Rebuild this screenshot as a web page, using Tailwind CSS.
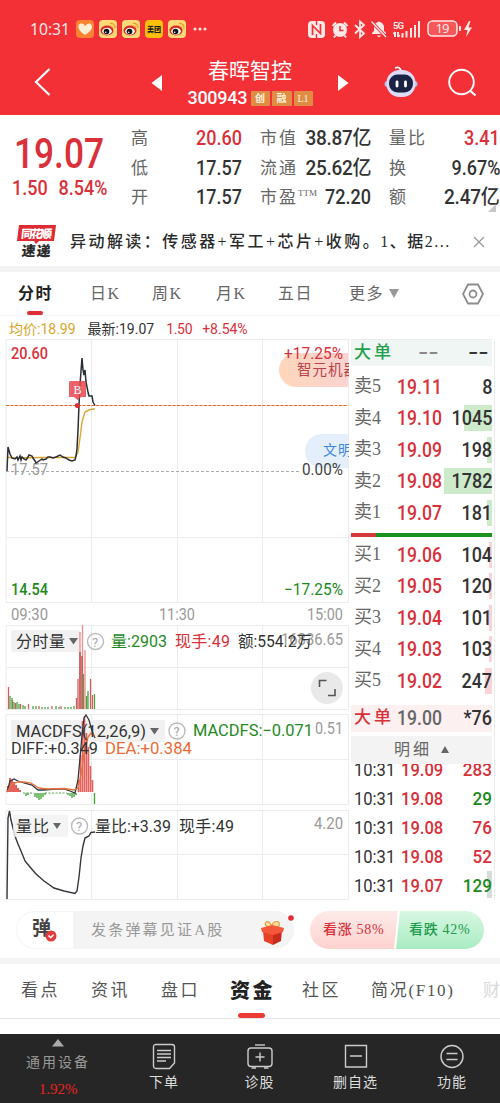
<!DOCTYPE html>
<html lang="zh">
<head>
    <meta charset="UTF-8">
    <meta name="viewport" content="width=device-width, initial-scale=1.0">
    <title>春晖智控 300943</title>
    <script src="https://cdn.jsdelivr.net/npm/@tailwindcss/browser@4"></script>
</head>
<body class="bg-white w-[500px] h-[1103px] overflow-hidden font-['Roboto','Noto_Sans_CJK_SC',sans-serif] text-[#333]">

<!-- 顶部 -->
<header class="h-[115px] bg-[#f23036] text-white">
    <!-- 状态栏 -->
    <svg class="block" width="500" height="50" viewBox="0 0 500 50">
        <text x="30" y="34.500" font-size="16" fill="#ffe9e6" textLength="40" lengthAdjust="spacingAndGlyphs" font-family="Noto Sans">10:31</text>
        <rect x="76" y="20" width="18" height="18" rx="4" fill="#f98330"/>
        <path d="M85 35C77 30 77 24 81 23.500Q84 23 85 26Q87 23 90 23.500C94 26 92 31 85 35Z" fill="#fff0d5"/>
        <defs>
            <g id="weibo">
                <rect width="18" height="18" rx="4" fill="#ffd978"/>
                <ellipse cx="8" cy="10.500" rx="6.500" ry="5" fill="#d92c22"/>
                <ellipse cx="8" cy="11.300" rx="4.800" ry="3.500" fill="#fff"/>
                <circle cx="7.500" cy="11.500" r="2.800" fill="#111"/>
                <circle cx="6.700" cy="12.200" r=".8" fill="#fff"/>
                <path d="M11 3.500Q16 3 16 8.500M11.500 6Q13.500 6 13.500 8" fill="none" stroke="#f09a2c" stroke-width="1.200"/>
            </g>
        </defs>
        <use href="#weibo" x="99" y="20"/>
        <use href="#weibo" x="122" y="20"/>
        <rect x="145" y="20" width="18" height="18" rx="4" fill="#fbc10a"/>
        <text x="147" y="32" font-size="7" font-weight="900" fill="#1b1b1b" font-family="Noto Sans CJK SC">美团</text>
        <use href="#weibo" x="168" y="20"/>
        <g fill="#ffe9e6"><circle cx="195" cy="29" r="1.500"/><circle cx="200" cy="29" r="1.500"/><circle cx="205" cy="29" r="1.500"/></g>
        <!-- NFC -->
        <rect x="308" y="21" width="17" height="17" rx="4" fill="#ffe9e6"/>
        <path d="M312.500 35V25.500L320.500 33.500V24" fill="none" stroke="#f23036" stroke-width="1.700"/>
        <path d="M316.500 20V25M316.500 34V39" stroke="#f23036" stroke-width="1.400"/>
        <!-- 闹钟 -->
        <circle cx="340" cy="30" r="7" fill="#ffe9e6"/>
        <path d="M332.500 26L336 22.500M347.500 26L344 22.500M335.500 35.500L334 37.500M344.500 35.500L346 37.500" stroke="#ffe9e6" stroke-width="2"/>
        <path d="M340 26V30.500H343.500" fill="none" stroke="#f23036" stroke-width="1.500"/>
        <!-- 蓝牙 -->
        <path d="M355 25L364 33.500L360 37V21.500L364 25L355 33.500" fill="none" stroke="#ffe9e6" stroke-width="1.800"/>
        <!-- 静音 -->
        <path d="M372 34V33L374 31V27Q374 23 379 21.500Q384 23 384 27V31L386 33V34ZM377 35.500H381Q379 39 377 35.500Z" fill="#ffe9e6"/>
        <path d="M371 21L386 37" stroke="#f23036" stroke-width="3"/>
        <path d="M371.500 21.500L386 37" stroke="#ffe9e6" stroke-width="1.400"/>
        <!-- 信号 -->
        <text x="393" y="28.500" font-size="9.500" font-weight="700" fill="#ffe9e6" textLength="11">5G</text>
        <path d="M395 32V37M393.500 34L395 32M398 32V37M398 37L399.500 35M402.500 33V37.500M406.500 31V37.500M411 28V37.500M415 25V37.500M419 21V37.500" stroke="#ffe9e6" stroke-width="2"/>
        <!-- 电池 -->
        <rect x="428" y="21" width="29" height="15" rx="4.500" fill="#f5575b" stroke="#ffe9e6" stroke-width="1.500"/>
        <text x="435.500" y="33" font-size="13" fill="#ffe9e6" textLength="14" font-family="Noto Sans">19</text>
        <path d="M460 26V31" stroke="#ffe9e6" stroke-width="2"/>
        <path d="M469 21L464 30H467.500L466 37L472 27.500H468.500L470.500 21Z" fill="#ffe9e6"/>
    </svg>
    <!-- 标题栏 -->
    <div class="h-[65px] flex items-center">
        <svg class="shrink-0" width="180" height="65" viewBox="0 50 180 65">
            <path d="M49.500 69L36 82L49.500 95" fill="none" stroke="#fff" stroke-width="2.200"/>
            <path d="M162 75V91L151.500 83Z" fill="#fff"/>
        </svg>
        <div class="w-[140px] flex flex-col items-center">
            <h1 class="text-[21px] leading-[26px]">春晖智控</h1>
            <div class="flex items-center mt-[5px]">
                <span class="text-[18px] leading-[18px] font-medium w-[60px] tracking-[-0.300px]">300943</span>
                <span class="flex gap-[2px] ml-[3px] text-[10px] leading-[15px] font-bold text-center text-[#fff3dd]">
                    <i class="not-italic w-[19px] h-[15px] bg-[#e08c45] rounded-[1px]">创</i>
                    <i class="not-italic w-[20px] h-[15px] bg-[#e08c45] rounded-[1px]">融</i>
                    <i class="not-italic w-[19px] h-[15px] bg-[#e08c45] rounded-[1px] font-normal font-['Liberation_Serif',serif]">L1</i>
                </span>
            </div>
        </div>
        <svg class="shrink-0" width="180" height="65" viewBox="320 50 180 65">
            <path d="M338 75V91L348.500 83Z" fill="#fff"/>
            <path d="M395 68Q400 66 401 71" fill="none" stroke="#fff" stroke-width="1.800"/>
            <circle cx="387.500" cy="84" r="3" fill="#b9bce9"/><circle cx="414.500" cy="84" r="3" fill="#b9bce9"/>
            <rect x="386.500" y="70" width="29" height="27" rx="13" fill="#dcdcf8"/>
            <rect x="389" y="74.500" width="24" height="18" rx="8.500" fill="#1b2344"/>
            <path d="M397 82V86M405.500 82V86" stroke="#fff" stroke-width="2.800" stroke-linecap="round"/>
            <circle cx="461.500" cy="82" r="12.300" fill="none" stroke="#fff" stroke-width="1.900"/>
            <path d="M470 90.500L475.500 95.500" stroke="#fff" stroke-width="2.200"/>
        </svg>
    </div>
</header>

<!-- 行情概览 -->
<section class="h-[105px] flex relative">
    <div class="w-[131px] text-[#d9303a] font-medium pl-[12px] pt-[21px]">
        <div class="text-[42px] leading-[36px] w-[106px] ml-[2px] scale-x-[0.84] origin-left">19.07</div>
        <div class="text-[20px] leading-[24px] mt-[4px] w-[120px] flex gap-[12px] scale-x-[0.9] origin-left"><span>1.50</span><span>8.54%</span></div>
    </div>
    <div class="w-[111px] pt-[9px] leading-[29.500px]">
        <div class="flex justify-between"><span class="text-[17px] text-[#666]">高</span><b class="font-medium text-[20px] scale-x-90 origin-right text-[#d9303a]">20.60</b></div>
        <div class="flex justify-between"><span class="text-[17px] text-[#666]">低</span><b class="font-medium text-[20px] scale-x-90 origin-right">17.57</b></div>
        <div class="flex justify-between"><span class="text-[17px] text-[#666]">开</span><b class="font-medium text-[20px] scale-x-90 origin-right">17.57</b></div>
    </div>
    <div class="w-[111px] ml-[18px] pt-[9px] leading-[29.500px] whitespace-nowrap">
        <div class="flex justify-between"><span class="text-[17px] text-[#666] tracking-[2px] w-[40px]">市值</span><b class="font-medium text-[20px] scale-x-[0.95] origin-right tracking-[-0.300px]">38.87亿</b></div>
        <div class="flex justify-between"><span class="text-[17px] text-[#666] tracking-[2px] w-[40px]">流通</span><b class="font-medium text-[20px] scale-x-[0.95] origin-right tracking-[-0.300px]">25.62亿</b></div>
        <div class="flex justify-between"><span class="text-[17px] text-[#666] tracking-[2px] w-[40px]">市盈<sup class="text-[9px] tracking-[0] font-['Liberation_Serif',serif] -top-[7px]">TTM</sup></span><b class="font-medium text-[20px] scale-x-90 origin-right">72.20</b></div>
    </div>
    <div class="w-[111px] ml-[18px] pt-[9px] leading-[29.500px] whitespace-nowrap">
        <div class="flex justify-between"><span class="text-[17px] text-[#666] tracking-[2px]">量比</span><b class="font-medium text-[20px] scale-x-90 origin-right text-[#d9303a]">3.41</b></div>
        <div class="flex justify-between"><span class="text-[17px] text-[#666]">换</span><b class="font-medium text-[20px] scale-x-90 origin-right">9.67%</b></div>
        <div class="flex justify-between"><span class="text-[17px] text-[#666]">额</span><b class="font-medium text-[20px] scale-x-[0.95] origin-right tracking-[-0.200px]">2.47亿</b></div>
    </div>
    <svg class="absolute right-[4px] bottom-[8px]" width="8" height="8"><path d="M8 0V8H0Z" fill="#c8c8c8"/></svg>
</section>

<!-- 异动解读 -->
<section class="h-[46px] flex items-center pl-[16px] pb-[2px]">
    <svg width="41" height="36" viewBox="0 0 41 36" class="shrink-0" font-family="Noto Sans CJK SC" font-weight="900">
        <path d="M3 1H40L38 17H23L20 20L18 17H1Z" fill="#e02b32"/>
        <text x="5" y="14" font-size="11.500" fill="#fff" textLength="31" transform="skewX(-5) translate(1 0)">同花顺</text>
        <text x="6" y="32.500" font-size="14" fill="#2b2b2b" textLength="29" transform="skewX(-5) translate(2 0)">速递</text>
    </svg>
    <p class="ml-[13px] w-[386px] text-[16px] tracking-[2.450px] font-medium whitespace-nowrap font-['Liberation_Serif','Noto_Sans_CJK_SC',sans-serif] text-[#2b2b2b]">异动解读：传感器+军工+芯片+收购<span class="tracking-[1.500px]">。1、据2...</span></p>
    <svg class="ml-[17px]" width="12" height="12" viewBox="0 0 12 12"><path d="M1 1L11 11M11 1L1 11" stroke="#999" stroke-width="1.300"/></svg>
</section>
<div class="h-[6px] bg-[#f3f3f3]"></div>

<!-- 周期 -->
<nav class="h-[44px] flex items-center pl-[18px] text-[16px] text-[#666] border-b border-[#f3f3f3] font-['Liberation_Serif','Noto_Sans_CJK_SC',sans-serif] tracking-[1.500px]">
    <span class="w-[72px] h-full flex items-center relative font-bold text-[#222]">分时<i class="absolute left-[9px] bottom-0 w-[16px] h-[4px] rounded-full bg-[#df2f3a]"></i></span>
    <span class="w-[62px]">日K</span>
    <span class="w-[64px]">周K</span>
    <span class="w-[62px]">月K</span>
    <span class="w-[71px]">五日</span>
    <span class="w-[39px]">更多</span>
    <svg width="12" height="10"><path d="M1 0H11L6 9Z" fill="#999"/></svg>
    <svg class="ml-[62px]" width="22" height="22" viewBox="0 0 22 22" fill="none" stroke="#8c8c8c" stroke-width="1.800"><path d="M6 1.500H16L21 11L16 20.500H6L1 11Z"/><circle cx="11" cy="11" r="3.500"/></svg>
</nav>

<div class="h-[23px] flex items-center pl-[9px] pt-[3px] text-[14px] gap-[12px]">
    <span class="text-[#d9a52b]">均价:18.99</span>
    <span>最新:19.07</span>
    <span class="text-[#d9303a] flex gap-[11px]"><i class="not-italic w-[25px] tracking-[-0.300px]">1.50</i><i class="not-italic">+8.54%</i></span>
</div>

<main class="h-[561px] flex pl-[5px]">
    <!-- 图表 -->
    <div class="w-[344px] shrink-0">
        <!-- 分时图 -->
        <svg class="block" width="344" height="286" viewBox="5 339 344 286" font-size="16.500">
            <defs>
                <linearGradient id="tagRed"><stop stop-color="#ffd6bb"/><stop offset="1" stop-color="#fbd3d0"/></linearGradient>
            </defs>
            <path d="M6 339.500H348.500V602.500H6ZM91.500 339V602M177.500 339V602M262.500 339V602M6 537.500H348" fill="none" stroke="#ececec"/>
            <path d="M348 353H296A17 17 0 0 0 296 387H348Z" fill="url(#tagRed)"/>
            <path d="M348 434H322A17 17 0 0 0 322 468H348Z" fill="#e5effc"/>
            <text x="297" y="374.500" font-size="14.500" fill="#b8434b" letter-spacing="1">智元机器</text>
            <text x="323" y="455" font-size="14" fill="#3c86dc" letter-spacing="1">文明</text>
            <path d="M6 405.500H348" stroke="#f8c9ab"/>
            <path d="M6 405.500H348" stroke="#dd6a30" stroke-dasharray="3 1.500"/>
            <path d="M6 471.500H301" stroke="#aaa" stroke-dasharray="3 2"/>
            <text x="11" y="358.500" fill="#d9303a" font-weight="500" textLength="37" lengthAdjust="spacingAndGlyphs">20.60</text>
            <text x="284" y="358.500" fill="#d9303a" textLength="59" lengthAdjust="spacingAndGlyphs">+17.25%</text>
            <text x="11" y="475" fill="#999" textLength="37" lengthAdjust="spacingAndGlyphs">17.57</text>
            <text x="302" y="475" fill="#444" textLength="41" lengthAdjust="spacingAndGlyphs">0.00%</text>
            <text x="11" y="595" fill="#1c8a1c" font-weight="500" textLength="37" lengthAdjust="spacingAndGlyphs">14.54</text>
            <text x="284" y="595" fill="#1c8a1c" textLength="59" lengthAdjust="spacingAndGlyphs">−17.25%</text>
            <path d="M7 457L12 458L40 457.500L75 457.500L78 452L80 438L82 422L85 412L90 409.500L95 409" fill="none" stroke="#dba730" stroke-width="1.400"/>
            <path d="M7 471L8 447L10 454L12 458L15 459L17 457L18 460L20 456L21 460L22 457L24 459L26 460L28 457L29 455L32 456L33 458L35 461L36 463L39 461L42 459L43 460L46 459L48 457L50 457L53 458L56 457L60 455L63 457L66 458L69 460L72 461L75 460L76 456L77 449L78 430L79 405L80 385L81 371L82 358L83 370L84 375L85 370L86 382L88 392L89 396L92 396L93 402L95 405.500" fill="none" stroke="#2a2f36" stroke-width="1.500"/>
            <path d="M70.500 381H84.500Q86 381 86 382.500V397H81L77.500 400L74 397H69V382.500Q69 381 70.500 381Z" fill="#e8474f" fill-opacity=".85"/>
            <text x="73.500" y="393.500" font-size="12" fill="#fff" font-family="Liberation Serif">B</text>
            <circle cx="77.500" cy="405.500" r="2.600" fill="#d9303a"/>
            <g fill="#999">
                <text x="11" y="620" textLength="37" lengthAdjust="spacingAndGlyphs">09:30</text>
                <text x="159" y="620" textLength="36" lengthAdjust="spacingAndGlyphs">11:30</text>
                <text x="307" y="620" textLength="36" lengthAdjust="spacingAndGlyphs">15:00</text>
            </g>
        </svg>

        <!-- 分时量 -->
        <svg class="block" width="344" height="89" viewBox="5 625 344 89" font-size="16" fill="#333">
            <path d="M6 625.500H348.500V709.500H6ZM91.500 625V709M177.500 625V709M262.500 625V709M6 667.500H348" fill="none" stroke="#ececec"/>
            <rect x="11" y="630" width="69" height="22" rx="2" fill="#f1f1f1"/>
            <path d="M8.500 709V687M12.500 709V700M15.500 709V703M20.500 709V704M28.500 709V704M39 709V706M52 709V706M61 709V706M76.500 709V698M78 709V679M90.500 709V679M92.500 709V695" stroke="#d0605e" stroke-width="1.300"/>
            <path d="M10 709V696M12 709V698M14 709V702M17 709V702M19 709V704M23 709V705M25 709V706M33 709V706M36 709V706M42 709V707M45 709V707M48 709V707M56 709V706M59 709V707M65 709V707M68 709V707M71 709V707M74 709V706M83.500 709V674M86.500 709V696M88 709V691M94.500 709V694" stroke="#4da344" stroke-width="1.300"/>
            <path d="M80 709V632M82.500 709V625M85 709V650" stroke="#eb8380" stroke-opacity=".85" stroke-width="1.400"/>
            <path d="M80 709V652M82 709V656" stroke="#c0504d" stroke-width="1.500"/>
            <text x="16" y="647" textLength="49">分时量</text>
            <path d="M69 638H78L73.500 644.500Z" fill="#666"/>
            <circle cx="95.500" cy="641.500" r="8" fill="none" stroke="#bbb" stroke-width="1.400"/>
            <text x="92" y="646.500" font-size="13" fill="#aaa">?</text>
            <text x="111" y="647" fill="#258a1e" textLength="56">量:2903</text>
            <text x="175" y="647" fill="#d9303a" textLength="55">现手:49</text>
            <text x="343" y="645" text-anchor="end" fill="#999" textLength="62" lengthAdjust="spacingAndGlyphs">16836.65</text>
            <text x="238" y="647" textLength="74" lengthAdjust="spacingAndGlyphs">额:554.2万</text>
            <circle cx="327" cy="688" r="16" fill="#e9e9e9"/>
            <path d="M319.500 687V680.500H326.500M335 689V695.500H328" fill="none" stroke="#555" stroke-width="1.600"/>
        </svg>

        <!-- MACDFS -->
        <svg class="block" width="344" height="96" viewBox="5 714 344 96" font-size="16" fill="#333">
            <path d="M6 714.500H348.500V804.500H6ZM91.500 714V804M177.500 714V804M262.500 714V804M6 759.500H348" fill="none" stroke="#ececec"/>
            <rect x="11" y="720" width="154" height="22" rx="2" fill="#f1f1f1"/>
            <path d="M8 792V786M10 792V778M12 792V780M14 792V782M16 792V785M18 792V788M20 792V790" stroke="#e0453f" stroke-width="1.700"/>
            <path d="M23 793H34M45 793H67" stroke="#59a651" stroke-dasharray="2 1.500"/>
            <path d="M26 793V796M28 793V795M35 793V797M37 793V798M39 793V800M41 793V799M43 793V797M45 793V795M68 793V795M70 793V796M72 793V798M74 793V797M76 793V795M94.500 793V804" stroke="#45a83e" stroke-width="1.400"/>
            <path d="M78.500 792V780M80.500 792V755M82.500 792V721M84.500 792V716M86.500 792V733M88.500 792V747M90.500 792V766M92.500 792V780" stroke="#e8605b" stroke-width="1.600"/>
            <path d="M7 792L10 781L14 779L18 781L24 783L32 785L38 790L44 790L55 789L64 789L70 791L75 793L78 780L80 758L82 735L84 718L86 715L89 720L92 731L95 738" fill="none" stroke="#34383d" stroke-width="1.300"/>
            <path d="M7 792L12 784L18 782L24 782L31 783L39 788L48 789L64 788.500L74 790L78 788L81 775L84 754L88 737L91 733L95 736" fill="none" stroke="#e4733d" stroke-width="1.300"/>
            <text x="16" y="736.500" textLength="130" lengthAdjust="spacingAndGlyphs">MACDFS(12,26,9)</text>
            <path d="M150 728H159L154.500 734.500Z" fill="#666"/>
            <circle cx="177" cy="731" r="8" fill="none" stroke="#bbb" stroke-width="1.400"/>
            <text x="173.500" y="736" font-size="13" fill="#aaa">?</text>
            <text x="193" y="735.500" fill="#258a1e" textLength="120" lengthAdjust="spacingAndGlyphs">MACDFS:−0.071</text>
            <text x="343" y="734" text-anchor="end" fill="#999" textLength="28" lengthAdjust="spacingAndGlyphs">0.51</text>
            <text x="11" y="753.500" textLength="87" lengthAdjust="spacingAndGlyphs">DIFF:+0.349</text>
            <text x="105" y="753.500" fill="#ec6b35" textLength="87" lengthAdjust="spacingAndGlyphs">DEA:+0.384</text>
        </svg>

        <!-- 量比 -->
        <svg class="block" width="344" height="90" viewBox="5 810 344 90" font-size="16" fill="#333">
            <path d="M6 810.500H348.500V899.500H6ZM91.500 810V899M177.500 810V899M262.500 810V899M6 854.500H348" fill="none" stroke="#ececec"/>
            <path d="M7 899L8 818L9.500 811L11 820L13 828L15 836L18 844L21 851L25 861L30 867L36 874L44 881L54 888L64 891L75 893.500L77 891L79 877L81 858L83 846L85 838L89 836L91 832.500L95 832" fill="none" stroke="#34383d" stroke-width="1.400"/>
            <rect x="13" y="815" width="55" height="22" rx="2" fill="#f1f1f1" fill-opacity=".8"/>
            <text x="16" y="832" textLength="33">量比</text>
            <path d="M53 823H61L57 829Z" fill="#666"/>
            <circle cx="79.500" cy="826" r="8" fill="none" stroke="#bbb" stroke-width="1.400"/>
            <text x="76" y="831" font-size="13" fill="#aaa">?</text>
            <text x="95" y="831.500" textLength="76" lengthAdjust="spacingAndGlyphs">量比:+3.39</text>
            <text x="179" y="831.500" textLength="55">现手:49</text>
            <text x="343" y="829" text-anchor="end" fill="#999" textLength="29" lengthAdjust="spacingAndGlyphs">4.20</text>
        </svg>
    </div>

    <!-- 五档盘口 -->
    <div class="w-[146px] pl-[2px] pr-[2px] border-r border-[#ececec] font-medium text-[20px]">
        <div class="h-[27px] flex items-center bg-[#f0f6f4] border-t border-[#ececec] pl-[3px]">
            <span class="w-[64px] text-[17px] tracking-[3px] text-[#22a04c]">大单</span>
            <span class="w-[50px] text-[#888] scale-x-[0.9] origin-left">−−</span>
            <span class="scale-x-[0.9] origin-left">−−</span>
        </div>
        <div id="sellList" class="pt-[5px]"></div>
        <div class="mt-[4.500px] h-[4px] flex"><i class="w-[25px] bg-[#d63a3c]"></i><i class="flex-1 bg-[#1a921e]"></i></div>
        <div id="buyList" class="pt-[2px]"></div>
        <div class="mt-[8px] h-[27px] flex items-center bg-[#fdf0f1] pl-[3px]">
            <span class="w-[43px] text-[17px] tracking-[3px] text-[#d9303a]">大单</span>
            <b class="font-medium text-[#666] scale-x-[0.88] origin-left w-[50px]">19.00</b>
            <b class="font-medium flex-1 text-right scale-x-[0.9] origin-right">*76</b>
        </div>
        <div class="mt-[4px] h-[28px] flex items-center justify-center gap-[9px] bg-[#f3f3f3] text-[16px] text-[#666] font-normal tracking-[3px]">明细<svg width="8" height="7"><path d="M4 0L8 7H0Z" fill="#666"/></svg></div>
        <!-- 成交明细 -->
        <div class="h-[136px] overflow-hidden text-[18px] leading-[29px] whitespace-nowrap">
            <div id="tradeList" class="-mt-[9px]"></div>
        </div>
    </div>
</main>

<!-- 弹幕 -->
<section class="h-[58px] flex items-center pl-[16px] pt-[2px] font-['Liberation_Serif','Noto_Sans_CJK_SC',sans-serif]">
    <div class="w-[278px] h-[38px] flex items-center rounded-full bg-[#f4f4f4] relative">
        <div class="w-[57px] h-full rounded-l-full bg-white border border-r-0 border-[#f6f6f6] relative">
            <span class="absolute left-[15px] top-[4px] text-[19px] leading-[26px] font-bold text-[#444]">弹</span>
            <svg class="absolute left-[28px] top-[18px]" width="12" height="12" viewBox="0 0 12 12"><circle cx="6" cy="6" r="5.500" fill="#e23b3b"/><path d="M3.500 5.500L5.700 7.700L8.500 4.800" fill="none" stroke="#fff" stroke-width="1.600"/></svg>
        </div>
        <span class="ml-[18px] text-[15px] tracking-[2.200px] text-[#999]">发条弹幕见证A股</span>
        <svg class="absolute right-0 -top-px" width="36" height="38" viewBox="258 910 36 38">
            <circle cx="291" cy="918" r="2.800" fill="#e02b32"/>
            <path d="M272 927C263 928 264 920 269 922L272 926C273 920 281 920 279 926Z" fill="#fbe0a0" stroke="#e89a3a" stroke-width="1.200"/>
            <path d="M263 930L273 933V945L264 941Z" fill="#e64027"/>
            <path d="M273 933L282 930L281 941L273 945Z" fill="#c92a20"/>
            <path d="M261 928L272 925L284 928L283 932L273 935L262 932Z" fill="#f4573a"/>
        </svg>
    </div>
    <div class="ml-[16px] flex h-[38px] text-[14px] tracking-[0.700px] leading-[38px] font-medium whitespace-nowrap">
        <div class="w-[88px] pl-[13px] rounded-l-full bg-linear-to-b from-[#fdebe9] to-[#fdd2cf] text-[#d9303a] [clip-path:polygon(0_0,100%_0,95.500%_100%,0_100%)]">看涨 <span class="font-normal">58%</span></div>
        <div class="w-[88px] -ml-[2px] pl-[13px] rounded-r-full bg-linear-to-b from-[#d8f7e3] to-[#a8ecc2] text-[#1d9a4c] [clip-path:polygon(4.500%_0,100%_0,100%_100%,0_100%)]">看跌 <span class="font-normal">42%</span></div>
    </div>
</section>
<div class="h-[6px] bg-[#f4f4f4]"></div>

<!-- 资讯标签 -->
<nav class="h-[55px] flex items-center pl-[21px] text-[17px] tracking-[2.500px] text-[#555] whitespace-nowrap overflow-hidden border-b border-[#e8e8e8] font-['Liberation_Serif','Noto_Sans_CJK_SC',sans-serif]">
    <span class="w-[70px] shrink-0">看点</span>
    <span class="w-[70px] shrink-0">资讯</span>
    <span class="w-[69px] shrink-0">盘口</span>
    <span class="w-[72px] shrink-0 h-full flex items-center relative font-black text-[20px] text-[#222]">资金<i class="absolute left-[8px] bottom-0 w-[27px] h-[5px] rounded-full bg-[#ec3b34]"></i></span>
    <span class="w-[69px] shrink-0">社区</span>
    <span class="w-[112px] shrink-0 tracking-[1.700px]">简况(F10)</span>
    <span class="text-[#d8d8d8]">财</span>
</nav>
<div class="h-[15px]"></div>

<!-- 底部导航 -->
<footer class="h-[69px] flex bg-[#262626] text-[#ddd] text-[14px] leading-[18px] tracking-[1px] text-center">
    <div class="w-[116px] flex flex-col items-center pt-[5px] text-[#999]">
        <svg width="12" height="8"><path d="M6 0L12 7.500H0Z" fill="#aaa"/></svg>
        <span class="mt-[6px] tracking-[2px]">通用设备</span>
        <span class="mt-[9px] text-[#f02020] tracking-[0] font-['Liberation_Serif',serif] text-[15px]">1.92%</span>
    </div>
    <div class="w-[96px] flex flex-col items-center pt-[9px]">
        <svg width="24" height="27" viewBox="0 0 24 27" fill="none" stroke="#ccc" stroke-width="1.400"><path d="M4 1.500H20Q22.500 1.500 22.500 4V20L17.500 25.500H4Q1.500 25.500 1.500 23V4Q1.500 1.500 4 1.500ZM5 7.500H19M5 11H19M5 14.500H19M5 18H14"/></svg>
        <span class="mt-[3px]">下单</span>
    </div>
    <div class="w-[95px] flex flex-col items-center pt-[9px]">
        <svg width="26" height="27" viewBox="0 0 26 27" fill="none" stroke="#ccc" stroke-width="1.400"><path d="M8 2H18"/><rect x="1" y="5" width="24" height="18.500" rx="3"/><path d="M8.500 14H17.500M13 9.500V18.500M4.500 25H9M17 25H21.500"/></svg>
        <span class="mt-[3px]">诊股</span>
    </div>
    <div class="w-[97px] flex flex-col items-center pt-[9px]">
        <svg width="24" height="27" viewBox="0 0 24 27" fill="none" stroke="#ccc" stroke-width="1.400"><path d="M1.500 2.500H22.500V24H1.500ZM6 13H18"/></svg>
        <span class="mt-[3px]">删自选</span>
    </div>
    <div class="w-[96px] flex flex-col items-center pt-[9px]">
        <svg width="24" height="27" viewBox="0 0 24 27" fill="none" stroke="#ccc" stroke-width="1.400"><circle cx="12" cy="13.500" r="11"/><path d="M6.500 10.500H17.500M6.500 16.500H17.500"/></svg>
        <span class="mt-[3px]">功能</span>
    </div>
</footer>

<script>
    // 档位: [名称, 价格, 数量, 背景条宽度]
    const sells = [['卖5', '19.11', 8, 0], ['卖4', '19.10', 1045, 28], ['卖3', '19.09', 198, 5], ['卖2', '19.08', 1782, 48], ['卖1', '19.07', 181, 5]];
    const buys = [['买1', '19.06', 104, 3], ['买2', '19.05', 120, 3], ['买3', '19.04', 101, 3], ['买4', '19.03', 103, 3], ['买5', '19.02', 247, 7]];
    const trades = [['19.09', 283, 'text-[#d9303a]'], ['19.08', 29, 'text-[#1c8a1c]'], ['19.08', 76, 'text-[#d9303a]'], ['19.08', 52, 'text-[#d9303a]'], ['19.07', 129, 'text-[#1c8a1c]']];

    function renderLevels(id, list, barColor) {
        document.getElementById(id).innerHTML = list.map(([name, price, volume, bar]) => `
            <div class="h-[31.500px] flex items-center pl-[3px]">
                <span class="w-[43px] text-[18px] text-[#666] font-normal font-['Liberation_Serif','Noto_Sans_CJK_SC',sans-serif]">${name}</span>
                <b class="font-medium text-[#d9303a] scale-x-[0.88] origin-left w-[50px]">${price}</b>
                <b class="font-medium flex-1 h-[26px] leading-[26px] text-right relative">
                    <i class="absolute right-0 top-0 h-full ${barColor}" style="width: ${bar}px"></i>
                    <span class="relative inline-block scale-x-[0.9] origin-right">${volume}</span>
                </b>
            </div>`).join('');
    }

    renderLevels('sellList', sells, 'bg-[#cdebcb]');
    renderLevels('buyList', buys, 'bg-[#fbd3d6]');

    document.getElementById('tradeList').innerHTML = trades.map(([price, volume, color], i) => `
        <div class="flex pl-[3px] relative">
            ${i === 4 ? '<i class="absolute right-0 top-0 w-[5px] h-[27px] bg-[#d5dedb]"></i>' : ''}
            <span class="w-[47px] font-normal scale-x-[0.92] origin-left">10:31</span>
            <b class="font-medium w-[46px] text-[#d9303a] scale-x-[0.92] origin-left">${price}</b>
            <b class="font-medium flex-1 text-right scale-x-[0.95] origin-right ${color}">${volume}</b>
        </div>`).join('');
</script>
</body>
</html>
